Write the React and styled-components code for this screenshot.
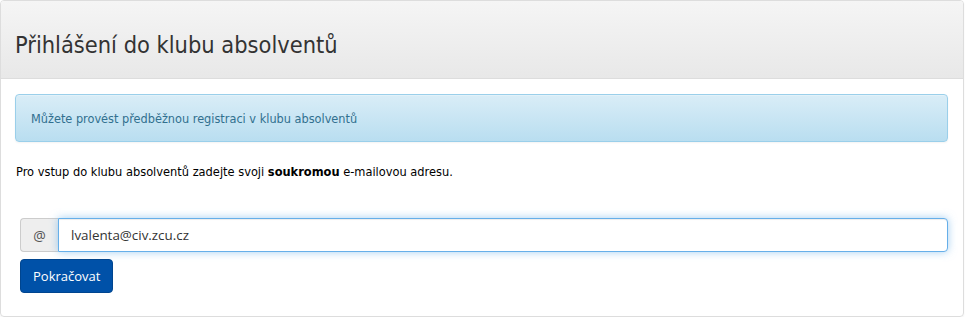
import React from "react";
import styled, { createGlobalStyle } from "styled-components";

const Global = createGlobalStyle`
  html, body {
    margin: 0;
    padding: 0;
    background: #fff;
  }
  body {
    font-family: "DejaVu Sans Condensed", "DejaVu Sans", sans-serif;
    font-size: 12.7px;
    color: #000;
  }
`;

const Panel = styled.div`
  width: 964px;
  height: 317px;
  border: 1px solid #ddd;
  border-radius: 4px;
  box-sizing: border-box;
  overflow: hidden;
  box-shadow: 0 1px 2px rgba(0, 0, 0, 0.05);
`;

const Heading = styled.div`
  height: 78px;
  box-sizing: border-box;
  padding: 10px 15px 0 14px;
  display: flex;
  align-items: center;
  background: linear-gradient(to bottom, #f5f5f5 0, #e8e8e8 100%);
  border-bottom: 1px solid #ddd;

  h1 {
    margin: 0;
    font-size: 23.4px;
    font-weight: normal;
    color: #333;
  }
`;

const Body = styled.div`
  padding: 15px 15px 0 14px;
`;

const Alert = styled.div`
  height: 48px;
  box-sizing: border-box;
  padding: 0 15px;
  display: flex;
  align-items: center;
  color: #31708f;
  font-size: 12.6px;
  background: linear-gradient(to bottom, #d9edf7 0, #b9def0 100%);
  border: 1px solid #9acfea;
  border-radius: 4px;
  box-shadow: inset 0 1px 0 rgba(255, 255, 255, 0.25), 0 1px 2px rgba(0, 0, 0, 0.05);
`;

const Intro = styled.p`
  margin: 22px 0 0 1px;

  b {
    font-weight: bold;
  }
`;

const Form = styled.form`
  margin: 39px 0 0 5px;
  display: flex;
  flex-direction: column;
  align-items: flex-start;
  gap: 7px;
  font-family: "Open Sans", sans-serif;
`;

const InputGroup = styled.div`
  display: flex;
  width: 928px;
  height: 34px;
`;

const Addon = styled.span`
  width: 38px;
  box-sizing: border-box;
  display: flex;
  align-items: center;
  justify-content: center;
  background: #eee;
  border: 1px solid #ccc;
  border-right: none;
  border-radius: 4px 0 0 4px;
  color: #555;
  font-size: 14px;
`;

const Input = styled.input`
  flex: 1;
  box-sizing: border-box;
  height: 34px;
  padding: 0 12px;
  border: 1px solid #66afe9;
  border-radius: 0 4px 4px 0;
  outline: none;
  font-family: "Open Sans", sans-serif;
  font-size: 13.4px;
  color: #333;
  box-shadow: inset 0 1px 1px rgba(0, 0, 0, 0.075), 0 0 8px rgba(102, 175, 233, 0.6);
`;

const Button = styled.button`
  height: 34px;
  padding: 0 12px;
  background: #0051a8;
  border: 1px solid #00458f;
  border-radius: 4px;
  color: #fff;
  font-family: "Open Sans", sans-serif;
  font-size: 13px;
  cursor: pointer;
`;

export default function App() {
  return (
    <>
      <Global />
      <Panel>
        <Heading>
          <h1>Přihlášení do klubu absolventů</h1>
        </Heading>
        <Body>
          <Alert>Můžete provést předběžnou registraci v klubu absolventů</Alert>
          <Intro>
            Pro vstup do klubu absolventů zadejte svoji <b>soukromou</b> e-mailovou adresu.
          </Intro>
          <Form onSubmit={(e) => e.preventDefault()}>
            <InputGroup>
              <Addon>@</Addon>
              <Input type="text" defaultValue="lvalenta@civ.zcu.cz" />
            </InputGroup>
            <Button type="submit">Pokračovat</Button>
          </Form>
        </Body>
      </Panel>
    </>
  );
}
